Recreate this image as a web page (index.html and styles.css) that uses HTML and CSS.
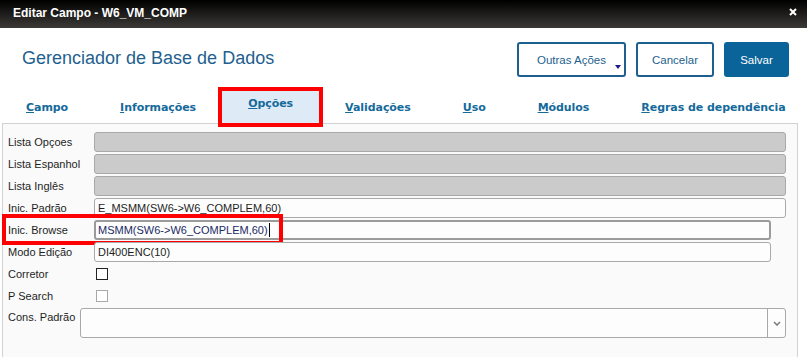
FILE: index.html
```html
<!DOCTYPE html>
<html lang="pt-BR">
<head>
    <meta charset="UTF-8">
    <title>Editar Campo - W6_VM_COMP</title>
    <link rel="stylesheet" href="styles.css">
</head>
<body>
    <div class="titlebar">
        <span class="titlebar-text">Editar Campo - W6_VM_COMP</span>
        <svg class="close-icon" width="8" height="8" viewBox="0 0 8 8">
            <path d="M1 1 L7 7 M7 1 L1 7" stroke="#fff" stroke-width="2" />
        </svg>
    </div>

    <div class="header">
        <h1 class="page-title">Gerenciador de Base de Dados</h1>
        <div class="actions">
            <button class="btn btn-outline btn-more">Outras Ações<span class="caret"></span></button>
            <button class="btn btn-outline btn-cancel">Cancelar</button>
            <button class="btn btn-primary">Salvar</button>
        </div>
    </div>

    <div class="tabs">
        <div class="tab"><u>C</u>ampo</div>
        <div class="tab"><u>I</u>nformações</div>
        <div class="tab active"><u>O</u>pções</div>
        <div class="tab"><u>V</u>alidações</div>
        <div class="tab"><u>U</u>so</div>
        <div class="tab"><u>M</u>ódulos</div>
        <div class="tab"><u>R</u>egras de dependência</div>
    </div>

    <div class="panel">
        <div class="row">
            <label class="label">Lista Opçoes</label>
            <div class="field disabled"></div>
        </div>
        <div class="row">
            <label class="label">Lista Espanhol</label>
            <div class="field disabled"></div>
        </div>
        <div class="row">
            <label class="label">Lista Inglês</label>
            <div class="field disabled"></div>
        </div>
        <div class="row">
            <label class="label">Inic. Padrão</label>
            <div class="field">E_MSMM(SW6-&gt;W6_COMPLEM,60)</div>
        </div>
        <div class="row row-short highlighted">
            <label class="label">Inic. Browse</label>
            <div class="field focused">MSMM(SW6-&gt;W6_COMPLEM,60)<span class="cursor"></span></div>
            <div class="annotation"></div>
        </div>
        <div class="row row-short">
            <label class="label">Modo Edição</label>
            <div class="field">DI400ENC(10)</div>
        </div>
        <div class="row">
            <label class="label">Corretor</label>
            <span class="checkbox"></span>
        </div>
        <div class="row">
            <label class="label">P Search</label>
            <span class="checkbox inactive"></span>
        </div>
        <div class="row row-combo">
            <label class="label label-combo">Cons. Padrão</label>
            <div class="combo">
                <div class="combo-value"></div>
                <div class="combo-button">
                    <svg width="8" height="5" viewBox="0 0 8 5">
                        <path d="M1 1 L4 4 L7 1" fill="none" stroke="#777" stroke-width="1.5" />
                    </svg>
                </div>
            </div>
        </div>
    </div>
</body>
</html>
```

FILE: styles.css
```css
* {
    margin: 0;
    padding: 0;
    box-sizing: border-box;
}

body {
    font-family: "Liberation Sans", Arial, sans-serif;
    font-size: 11px;
    color: #1e1e1e;
    background: #fff;
    width: 807px;
    height: 357px;
    overflow: hidden;
}

/* window title */
.titlebar {
    height: 28px;
    display: flex;
    align-items: center;
    justify-content: space-between;
    padding: 0 10px 2px 13px;
    background: linear-gradient(180deg, #000 0%, #1e1d1b 50%, #3c3a37 100%);
}

.titlebar-text {
    color: #fff;
    font-size: 12px;
    font-weight: bold;
}

.close-icon {
    margin-top: -2px;
}

/* header */
.header {
    display: flex;
    align-items: center;
    justify-content: space-between;
    padding: 14px 18px 0 22px;
}

.page-title {
    font-size: 18px;
    font-weight: normal;
    color: #1f5f8f;
    margin-top: -2px;
}

.actions {
    display: flex;
    gap: 10px;
}

.btn {
    height: 35px;
    font-family: "Liberation Sans", Arial, sans-serif;
    font-size: 11.5px;
    border-radius: 3px;
    cursor: pointer;
}

.btn-outline {
    background: #fff;
    border: 2px solid #1d5f8e;
    color: #1d5f8e;
}

.btn-more {
    width: 109px;
    position: relative;
}

.btn-cancel {
    width: 78px;
}

.btn-primary {
    width: 65px;
    background: #0b6499;
    border: none;
    color: #fff;
}

.caret {
    position: absolute;
    right: 3px;
    bottom: 6px;
    border-left: 3px solid transparent;
    border-right: 3px solid transparent;
    border-top: 4px solid #1a1a8c;
}

/* tabs */
.tabs {
    display: flex;
    height: 46px;
    padding-top: 10px;
}

.tab {
    height: 36px;
    padding: 14px 26px 0;
    line-height: 14px;
    font-family: "DejaVu Sans", Verdana, sans-serif;
    font-size: 11px;
    font-weight: bold;
    letter-spacing: -0.06px;
    color: #156a9b;
    white-space: nowrap;
}

.tab.active {
    height: 40px;
    margin: 0 -4px -4px;
    padding-top: 6px;
    border: 4px solid #f00;
    background: #dfeaf7;
    position: relative;
    z-index: 2;
}

/* form panel */
.panel {
    margin: 0 9px 0 2px;
    height: 240px;
    border: 1px solid #d2d2d2;
    border-bottom: none;
    background: #fafafa;
    padding: 8px 11px 0 5px;
}

.row {
    display: flex;
    align-items: center;
    min-height: 20px;
    margin-bottom: 2px;
    position: relative;
}

.row-short {
    padding-right: 15px;
}

.label {
    width: 86px;
    flex-shrink: 0;
}

.field {
    flex: 1;
    height: 20px;
    line-height: 18px;
    padding: 0 3px;
    border: 1px solid #a9a9a9;
    border-radius: 3px;
    background: #fdfdfd;
    white-space: nowrap;
}

.field.disabled {
    background: #cbcbcb;
}

.field.focused {
    border: 2px solid #9b9b9b;
    line-height: 16px;
    color: #1b2b66;
    padding-left: 2px;
}

.cursor {
    display: inline-block;
    width: 1px;
    height: 14px;
    margin-left: 1px;
    vertical-align: -3px;
    background: #000;
}

.annotation {
    position: absolute;
    left: -6px;
    top: -6px;
    width: 281px;
    height: 31px;
    border: 4px solid #f00;
    pointer-events: none;
}

.checkbox {
    display: inline-block;
    width: 12px;
    height: 12px;
    margin-left: 2px;
    border: 1.5px solid #222;
    background: #fff;
}

.checkbox.inactive {
    border-color: #a8a8a8;
}

.row-combo {
    align-items: flex-start;
}

.label-combo {
    width: 72px;
    padding-top: 3px;
}

.combo {
    flex: 1;
    display: flex;
    height: 30px;
    border: 1px solid #a9a9a9;
    border-radius: 3px;
    background: #fdfdfd;
}

.combo-value {
    flex: 1;
}

.combo-button {
    width: 18px;
    border-left: 1px solid #a9a9a9;
    display: flex;
    align-items: center;
    justify-content: center;
}
```
